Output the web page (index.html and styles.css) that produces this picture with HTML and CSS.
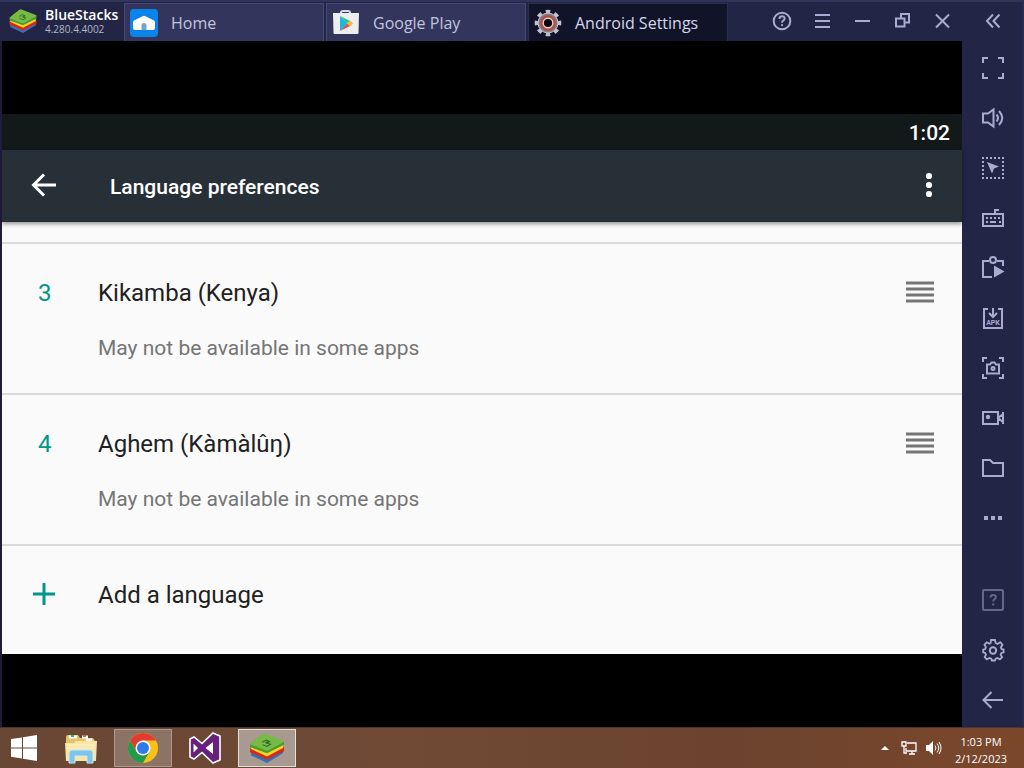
FILE: index.html
```html
<!DOCTYPE html>
<html lang="en">
<head>
<meta charset="utf-8">
<title>BlueStacks</title>
<link rel="stylesheet" href="styles.css">
</head>
<body>
<svg class="defs" aria-hidden="true">
  <symbol id="stack" viewBox="0 0 32 28">
    <path d="M1 17l15 7 15-9v4l-15 9-15-7z" fill="#2f74b8"/>
    <path d="M0 14l16 7 16-8v4l-16 8-16-7z" fill="#d9271f"/>
    <path d="M1 12l15 6 15-8v4l-15 8-15-7z" fill="#f6d61e"/>
    <path d="M0 10.500L12 1l20 7v3l-16 8-16-6z" fill="#4f9836"/>
    <path d="M0 10.500Q6 5 12 .8q1.500-.8 3 0L31 7q1.500.8 0 1.800L17.500 16q-1.500.8-3 .2z" fill="#76bb43"/>
    <path d="M11.500 8.500l4-2 3 1.500-2.500 1.500 3.500 1-3.500 2-4-1.500M14.500 9l2.500-1.200" fill="none" stroke="#2e6a2c" stroke-width="1"/>
  </symbol>
</svg>
<div class="window">
  <div class="main">
    <header class="titlebar">
      <div class="brand">
        <svg class="brand-logo" viewBox="0 0 32 28"><use href="#stack"/></svg>
        <div>
          <div class="brand-name">BlueStacks</div>
          <div class="brand-version">4.280.4.4002</div>
        </div>
      </div>
      <nav class="tabs">
        <button class="tab">
          <svg class="tab-icon" viewBox="0 0 28 28"><rect width="28" height="28" rx="4" fill="#0b84ea"/><path d="M3 13Q3 11.500 5 11L12.500 7.200q1.500-.7 3 0L23 11q2 .5 2 2v6q0 2-2 2H5q-2 0-2-2z" fill="#fff"/><path d="M11.500 21v-5q0-2 2.500-2t2.500 2v5z" fill="#6fa6d8"/></svg>
          <span>Home</span>
        </button>
        <button class="tab">
          <svg class="tab-icon" viewBox="0 0 28 28"><path d="M9 5V3.500Q9 2 11 2h5q2 0 2 1.500V5" fill="none" stroke="#d9dbe4" stroke-width="2"/><path d="M1 4h26l-.5 20q0 1-1 1h-23q-1 0-1-1z" fill="#eceef2"/><path d="M8 7v15l7-7.500z" fill="#19b6e8"/><path d="M8 7l7 7.500 3-2.500z" fill="#25c391"/><path d="M8 22l7-7.500 3 2.500z" fill="#e5484d"/><path d="M15 14.500l3-3 3 3-3 3z" fill="#fbb62c"/></svg>
          <span>Google Play</span>
        </button>
        <button class="tab tab-active">
          <svg class="tab-icon" viewBox="0 0 28 28"><circle cx="14" cy="14" r="11.300" fill="none" stroke="#c3c2cc" stroke-width="4" pathLength="16" stroke-dasharray="1 1" stroke-dashoffset=".5"/><circle cx="14" cy="14" r="10" fill="#85828e" stroke="#c3c2cc"/><circle cx="14" cy="14" r="8" fill="#a8504e"/><circle cx="14" cy="14" r="4.800" fill="#07070d" stroke="#f3cdc0" stroke-width="1.400"/></svg>
          <span>Android Settings</span>
        </button>
      </nav>
      <div class="controls">
        <button class="icon-button" aria-label="Help"><svg viewBox="0 0 24 24"><circle cx="12" cy="12" r="8.300"/><path d="M9.500 10q0-2.700 2.600-2.700t2.500 2.300q0 1.300-1.400 2.100-1.200.7-1.200 2M12 15.300v1.700"/></svg></button>
        <button class="icon-button" aria-label="Menu"><svg viewBox="0 0 24 24"><path d="M5 6h15M5 12h15M5 18h15"/></svg></button>
        <button class="icon-button" aria-label="Minimize"><svg viewBox="0 0 24 24"><path d="M5 12h15"/></svg></button>
        <button class="icon-button" aria-label="Restore"><svg viewBox="0 0 24 24"><path d="M6 9.500h8.500v8h-8.500zM11 9V5h8v8.500H15"/></svg></button>
        <button class="icon-button" aria-label="Close"><svg viewBox="0 0 24 24"><path d="M6 5.500l13 13M19 5.500l-13 13"/></svg></button>
      </div>
    </header>
    <main class="viewport">
      <section class="phone">
        <div class="statusbar">1:02</div>
        <div class="appbar">
          <button class="appbar-button" aria-label="Back"><svg viewBox="0 0 28 28"><path d="M28 14H6M16 3.500L5.500 14 16 24.500" fill="none" stroke="#fff" stroke-width="3"/></svg></button>
          <h1 class="appbar-title">Language preferences</h1>
          <button class="appbar-button" aria-label="More options"><svg viewBox="0 0 28 28" fill="#fff"><circle cx="14" cy="5" r="3.100"/><circle cx="14" cy="14" r="3.100"/><circle cx="14" cy="23" r="3.100"/></svg></button>
        </div>
        <div class="list">
          <div class="row">
            <span class="row-mark">3</span>
            <div class="row-text">
              <div class="row-title">Kikamba (Kenya)</div>
              <div class="row-note">May not be available in some apps</div>
            </div>
            <button class="handle" aria-label="Reorder Kikamba"><svg viewBox="0 0 28 24"><path d="M0 3h28M0 9h28M0 15h28M0 21h28" stroke="#757575" stroke-width="3"/></svg></button>
          </div>
          <div class="row">
            <span class="row-mark">4</span>
            <div class="row-text">
              <div class="row-title">Aghem (Kàmàlûŋ)</div>
              <div class="row-note">May not be available in some apps</div>
            </div>
            <button class="handle" aria-label="Reorder Aghem"><svg viewBox="0 0 28 24"><path d="M0 3h28M0 9h28M0 15h28M0 21h28" stroke="#757575" stroke-width="3"/></svg></button>
          </div>
          <button class="row row-add">
            <span class="row-mark"><svg class="plus" viewBox="0 0 22 22"><path d="M11 0v22M0 11h22" stroke="#009688" stroke-width="3"/></svg></span>
            <span class="row-title">Add a language</span>
          </button>
        </div>
      </section>
    </main>
  </div>
  <aside class="sidebar">
    <button class="icon-button side-top" aria-label="Collapse"><svg viewBox="0 0 24 24"><path d="M12 5.500L6 12l6 6.500M18.500 5.500l-6 6.500 6 6.500"/></svg></button>
    <button class="icon-button" aria-label="Full screen"><svg viewBox="0 0 24 24"><path d="M2 7V2h5M17 2h5v5M22 17v5h-5M7 22H2v-5"/></svg></button>
    <button class="icon-button" aria-label="Volume"><svg viewBox="0 0 24 24"><path d="M2 7.500h5l5.500-4v17l-5.500-4H2zM15.500 8.500q3 3.500 0 7M18 5q6.500 7 0 14"/></svg></button>
    <button class="icon-button" aria-label="Lock cursor"><svg viewBox="0 0 24 24"><path d="M1 2h23M1 22h23M2 5v17M22 5v17" stroke-dasharray="2 2"/><path d="M6 6l12 4.500-5 2-2 5z" fill="currentColor" stroke="none"/></svg></button>
    <button class="icon-button" aria-label="Keyboard controls"><svg viewBox="0 0 24 24"><path d="M2 8h20v12H2zM14 8V4h4"/><path d="M5 12h15M5 16h3M18 16h2" stroke-dasharray="2 2"/><path d="M9 16h6"/></svg></button>
    <button class="icon-button" aria-label="Sync clipboard"><svg viewBox="0 0 24 24"><path d="M8 5H2v16h9M16 5h6v5"/><circle cx="12" cy="4" r="3"/><path d="M13 9.500l10.500 6-10.500 6z" fill="currentColor" stroke="none"/></svg></button>
    <button class="icon-button" aria-label="Install APK"><svg viewBox="0 0 24 24"><path d="M7 3H3v19h18V3h-4M12 2v8M8 7l4 4 4-4"/><text x="12" y="18.500" class="apk">APK</text></svg></button>
    <button class="icon-button" aria-label="Screenshot"><svg viewBox="0 0 24 24"><path d="M2 6V2h4M18 2h4v4M22 18v4h-4M6 22H2v-4M6 8.500h3l1.500-2h3l1.500 2h3v9H6z"/><circle cx="12" cy="12.500" r="1.500"/></svg></button>
    <button class="icon-button" aria-label="Record"><svg viewBox="0 0 24 24"><path d="M2 6h15v12H2zM17 12l5-4v8zM22 6v12"/><circle cx="7" cy="11" r="1.200" fill="currentColor"/></svg></button>
    <button class="icon-button" aria-label="Media folder"><svg viewBox="0 0 24 24"><path d="M2 20V4h7l3 3h10v13z"/></svg></button>
    <button class="icon-button" aria-label="More"><svg viewBox="0 0 24 24" ><path d="M3 12h4M10 12h4M17 12h4" stroke-width="4"/></svg></button>
    <div class="side-bottom">
      <button class="icon-button dim" aria-label="Guide"><svg viewBox="0 0 24 24"><rect x="2" y="2" width="20" height="20" rx="1"/><path d="M9.500 9.500q0-2.500 2.700-2.500t2.600 2.300q0 1.200-1.400 2-1.200.7-1.200 2.200M12.200 15.500v2"/></svg></button>
      <button class="icon-button" aria-label="Settings"><svg viewBox="0 0 24 24"><path d="M10 2h4l.6 3 2 1 2.700-1.800 2.200 2.600-1.700 2.600.8 1.800 2 .4v2.800l-2.200.6-.8 1.800 1.500 2.400-2.200 2.200-2.600-1.400-1.700.8-.7 1.700h-3l-.7-1.700-1.800-.8-2.600 1.400-2.100-2.200 1.300-2.600-.8-1.600-2-.6v-2.800l2-.6.7-1.800L3.500 6.600l2.300-2.300 2.600 1.400 1.200-.7z" stroke-width="1.800"/><circle cx="12" cy="12.500" r="3.200"/></svg></button>
      <button class="icon-button" aria-label="Back"><svg viewBox="0 0 24 24"><path d="M22 12H3M10.500 4L2.500 12l8 8"/></svg></button>
    </div>
  </aside>
</div>
<footer class="taskbar">
  <button class="task" aria-label="Start"><svg class="start-icon" viewBox="0 0 26 26" fill="#fff"><path d="M0 4l11-1.600V12.400H0zM12 2.200L26 0v12.400H12zM0 13.400h11v10L0 21.800zM12 13.400h14V26l-14-2.200z"/></svg></button>
  <button class="task" aria-label="File Explorer"><svg class="task-icon" viewBox="0 0 34 32"><path d="M2 5q0-2 2-2h10l2 3h13l2 3v20H2z" fill="#e2c36b"/><path d="M5 5h8M18 5h6M22 8h6" stroke="#f7fbfa" stroke-width="3"/><path d="M7 4h3" stroke="#3fae5f" stroke-width="2"/><path d="M19 4h3" stroke="#d26445" stroke-width="2"/><path d="M1 11h9l2-2h21l-1 20H2z" fill="#f7e6a4"/><path d="M3 13h28M3 16h28" stroke="#fff3c6" stroke-width="1"/><path d="M5 31V21q0-3 3-3h18q3 0 3 3v10h-6v-7H11v7z" fill="#7fc4ea" stroke="#cbe9f8"/></svg></button>
  <button class="task task-open" aria-label="Chrome"><svg class="task-icon" viewBox="0 0 32 32"><circle cx="16" cy="16" r="15" fill="#fbc116"/><path d="M3 8.500A15 15 0 0 1 29 8.500H16L9.500 19.700z" fill="#e33b2e"/><path d="M3 8.500A15 15 0 0 0 16 31l6.500-11.200L9.500 19.700z" fill="#229a4b"/><circle cx="16" cy="16" r="7.500" fill="#fff"/><circle cx="16" cy="16" r="6" fill="#2f7be8"/></svg></button>
  <button class="task" aria-label="Visual Studio"><svg class="task-icon" viewBox="0 0 32 32"><path d="M24 1l7 3v24l-7 3-11-10.500L5 27l-4-2V7l4-2 8 6.500z" fill="#68217a" stroke="#fff" stroke-width="1.600"/><path d="M24 10v12l-7.500-6zM4.500 11.500v9l4.500-4.500z" fill="#fff"/></svg></button>
  <button class="task task-active" aria-label="BlueStacks"><svg class="task-icon" viewBox="0 0 32 28"><use href="#stack"/></svg></button>
  <div class="tray">
    <button class="tray-button" aria-label="Show hidden icons"><svg viewBox="0 0 18 18"><path d="M5 11l4-4 4 4z" fill="#fff"/></svg></button>
    <button class="tray-button" aria-label="Network"><svg viewBox="0 0 18 18" fill="none" stroke="#fff" stroke-width="1.300"><path d="M7 4h9v8H6V9M9 15h6M12 12v3M2 3h4v4H2zM4 7v7h3"/></svg></button>
    <button class="tray-button" aria-label="Sound"><svg viewBox="0 0 18 18"><path d="M2 6h3l4-4v14l-4-4H2z" fill="#fff"/><path d="M11 6.500q2 2.500 0 5M13 4.500q3.500 4.500 0 9M15 3q4 6 0 12" fill="none" stroke="#fff"/></svg></button>
  </div>
  <div class="clock"><div>1:03 PM</div><div>2/12/2023</div></div>
</footer>
</body>
</html>
```

FILE: styles.css
```css
* { box-sizing: border-box; }
body {
  margin: 0;
  min-height: 100vh;
  display: flex;
  flex-direction: column;
  background: #000;
  font-family: "Open Sans", "Noto Sans", sans-serif;
}
button {
  margin: 0;
  padding: 0;
  border: 0;
  background: none;
  color: inherit;
  font: inherit;
  text-align: left;
}
svg { display: block; }
.defs { display: none; }
.window { flex: 1; display: flex; background: #232546; }
.main { flex: 1; min-width: 0; display: flex; flex-direction: column; }

.titlebar {
  height: 41px;
  display: flex;
  border-top: 2px solid #2f3458;
}
.brand {
  width: 124px;
  flex: none;
  display: flex;
  align-items: center;
  gap: 8px;
  padding: 0 0 2px 9px;
}
.brand-logo { width: 28px; height: 24px; }
.brand-name { color: #fff; font-size: 14px; font-weight: 600; line-height: 16px; }
.brand-version { color: #b4b5c8; font-size: 10px; line-height: 12px; }
.tabs { flex: 1; display: flex; gap: 2px; padding-top: 1px; }
.tab {
  width: 200px;
  display: flex;
  align-items: center;
  gap: 13px;
  padding-left: 5px;
  border: 1px solid #464a73;
  border-bottom: 0;
  background: #34355d;
  color: #c3c4de;
  font-size: 16px;
  white-space: nowrap;
}
.tab-active { background: #111329; border-color: #2b2e52; color: #d5d7ea; }
.tab-icon { width: 28px; height: 28px; flex: none; }
.controls { display: flex; }
.icon-button {
  height: 50px;
  display: flex;
  align-items: center;
  justify-content: center;
  color: #a9abd0;
}
.icon-button svg {
  width: 24px;
  height: 24px;
  fill: none;
  stroke: currentColor;
  stroke-width: 2;
}
.controls .icon-button { width: 40px; height: 37px; }

.viewport {
  flex: 1;
  display: flex;
  flex-direction: column;
  justify-content: center;
  background: #000;
  border-left: 2px solid #1f1d3d;
}
.phone { font-family: Roboto, sans-serif; background: #fafafa; }
.statusbar {
  height: 36px;
  padding-right: 12px;
  background: #131819;
  color: #fff;
  font-size: 21px;
  font-weight: 500;
  line-height: 38px;
  text-align: right;
}
.appbar {
  height: 72px;
  display: flex;
  align-items: center;
  padding: 0 19px 2px 26px;
  background: #283037;
  box-shadow: 0 2px 4px rgba(0, 0, 0, 0.4);
}
.appbar-button svg { width: 28px; height: 28px; }
.appbar-title {
  flex: 1;
  margin: 0;
  padding: 4px 0 0 54px;
  color: #fff;
  font-size: 21px;
  font-weight: 500;
  line-height: 24px;
}
.list { padding-top: 20px; }
.row {
  width: 100%;
  display: flex;
  padding: 33px 28px 33px 0;
  border-top: 2px solid #dadada;
}
.row-add { padding-bottom: 43px; }
.row-mark {
  width: 96px;
  padding-left: 36px;
  color: #009688;
  font-size: 24px;
  line-height: 32px;
}
.row-text { flex: 1; display: grid; gap: 27px; }
.row-title { color: #212121; font-size: 24px; line-height: 32px; }
.row-note { color: #757575; font-size: 21px; line-height: 24px; }
.handle { align-self: flex-start; padding-top: 3px; }
.handle svg { width: 28px; height: 24px; }
.row-add .row-mark { padding: 4px 0 0 31px; }
.plus { width: 22px; height: 22px; }

.sidebar {
  width: 62px;
  flex: none;
  display: flex;
  flex-direction: column;
  padding-bottom: 2px;
  border-top: 2px solid #2f3458;
  border-right: 2px solid #2b2c54;
  padding-left: 2px;
}
.side-top { height: 41px; padding-bottom: 4px; }
.side-bottom { margin-top: auto; display: grid; }
.dim { color: #65678c; }
.apk {
  fill: currentColor;
  stroke: none;
  font-family: Roboto, sans-serif;
  font-size: 7px;
  font-weight: 700;
  text-anchor: middle;
}

.taskbar {
  height: 41px;
  display: flex;
  align-items: stretch;
  gap: 4px;
  padding: 1px 8px 1px 0;
  background: linear-gradient(90deg, #694735, #704a35 40%, #6b432f 70%, #7b472b);
  border-top: 1px solid #49342f;
  color: #fff;
}
.task {
  width: 58px;
  display: flex;
  align-items: center;
  justify-content: center;
  border: 1px solid transparent;
}
.task:first-child { width: 48px; }
.task-open { background: #8b7365; border-color: #ae9b90; }
.task-active { background: #a99a91; border-color: #e5dfdb; }
.start-icon { width: 26px; height: 26px; }
.task-icon { width: 34px; height: 32px; }
.tray { margin-left: auto; display: flex; align-items: center; gap: 6px; }
.tray-button svg { width: 18px; height: 18px; }
.clock {
  width: 70px;
  padding-top: 4px;
  font-size: 11px;
  line-height: 17px;
  text-align: center;
}
```
